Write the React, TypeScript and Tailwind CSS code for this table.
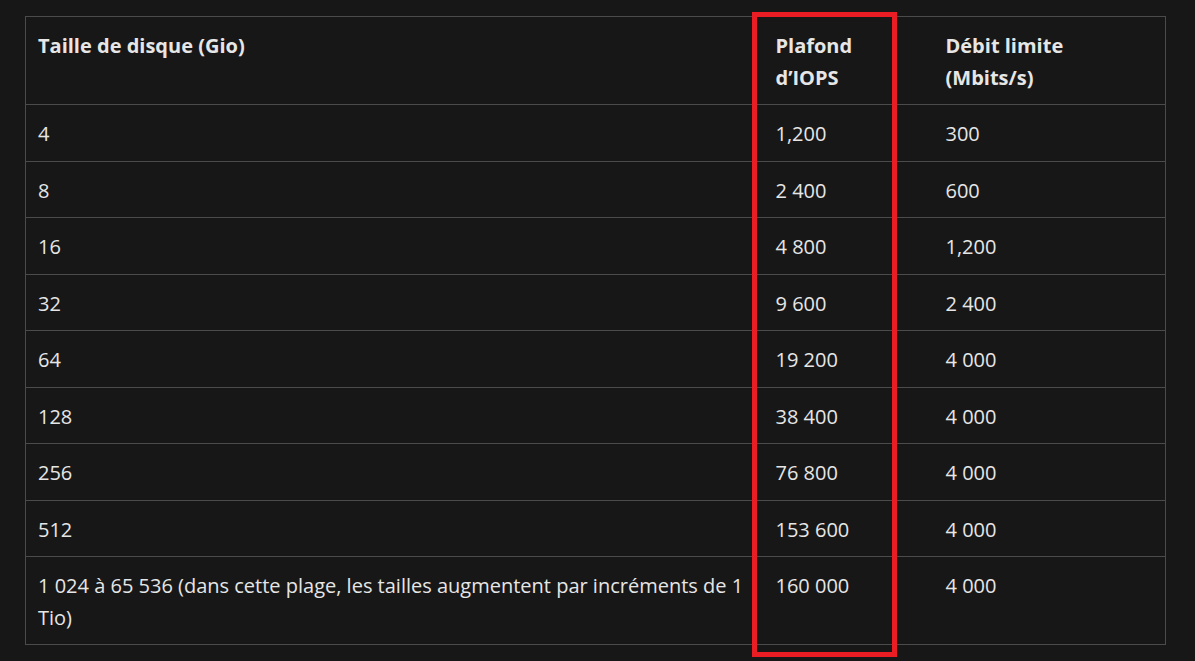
import React from "react";

const rows: [string, string, string][] = [
  ["4", "1,200", "300"],
  ["8", "2 400", "600"],
  ["16", "4 800", "1,200"],
  ["32", "9 600", "2 400"],
  ["64", "19 200", "4 000"],
  ["128", "38 400", "4 000"],
  ["256", "76 800", "4 000"],
  ["512", "153 600", "4 000"],
  [
    "1 024 à 65 536 (dans cette plage, les tailles augmentent par incréments de 1 Tio)",
    "160 000",
    "4 000",
  ],
];

const App = () => {
  return (
    <div
      className="min-h-[661px] w-full bg-[#171717] pl-[25px] pt-[16px] text-[#e6e6e6]"
      style={{ fontFamily: '"Open Sans", "Noto Sans", sans-serif' }}
    >
      <div className="relative w-[1140px]">
        <table className="w-[1140px] table-fixed border-collapse border border-[#4b4b4b] text-[20px] leading-[31.5px]">
          <colgroup>
            <col className="w-[738px]" />
            <col className="w-[170px]" />
            <col className="w-[232px]" />
          </colgroup>
          <thead>
            <tr className="border-b border-[#4b4b4b]">
              <th className="pt-[13px] pb-[11px] px-3 text-left align-top font-bold">Taille de disque (Gio)</th>
              <th className="pt-[13px] pb-[11px] pl-3 pr-[40px] text-left align-top font-bold">Plafond d’IOPS</th>
              <th className="pt-[13px] pb-[11px] pl-3 pr-5 text-left align-top font-bold">Débit limite (Mbits/s)</th>
            </tr>
          </thead>
          <tbody>
            {rows.map((r, i) => (
              <tr key={i} className="border-b border-[#4b4b4b]">
                <td className="pt-[13px] pb-[11px] px-3 align-top">{r[0]}</td>
                <td className="pt-[13px] pb-[11px] px-3 align-top">{r[1]}</td>
                <td className="pt-[13px] pb-[11px] px-3 align-top">{r[2]}</td>
              </tr>
            ))}
          </tbody>
        </table>
        {/* annotation box around the IOPS column */}
        <div className="pointer-events-none absolute left-[727px] top-[-4px] h-[645px] w-[145px] border-[5px] border-[#ea1c24]" />
      </div>
    </div>
  );
};

export default App;
